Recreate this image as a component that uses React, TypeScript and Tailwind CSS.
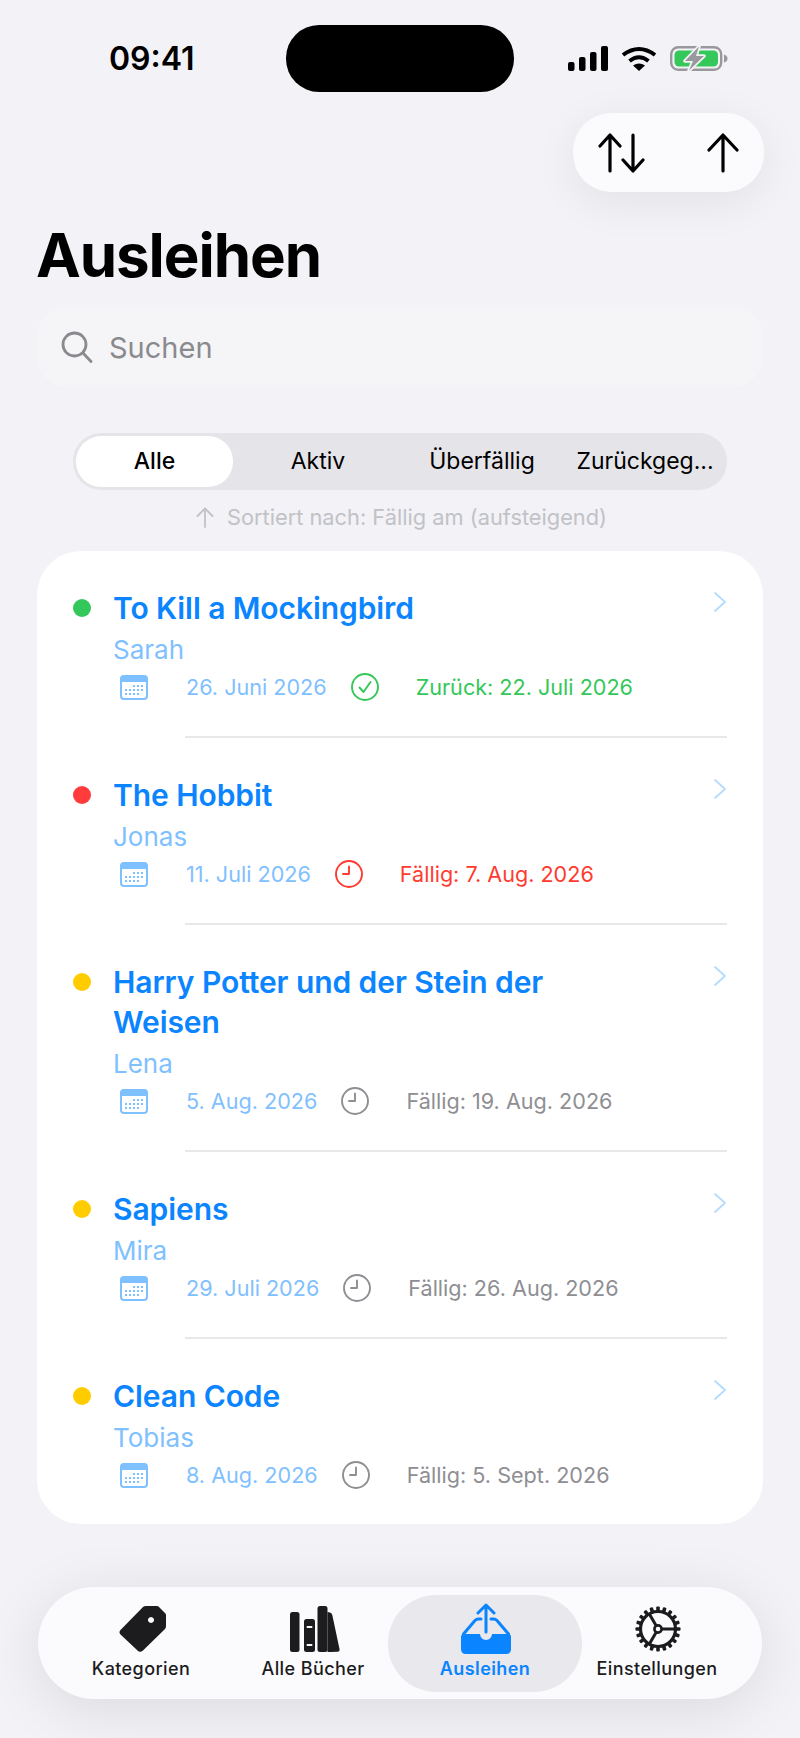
/**
 * Ausleihen screen
 * Loan list with filter tabs and bottom navigation
 */
type Status = 'returned' | 'overdue' | 'active'

interface Loan {
  title: string
  borrower: string
  lent: string
  due: string
  status: Status
}

const loans: Loan[] = [
  { title: 'To Kill a Mockingbird', borrower: 'Sarah', lent: '26. Juni 2026', due: 'Zurück: 22. Juli 2026', status: 'returned' },
  { title: 'The Hobbit', borrower: 'Jonas', lent: '11. Juli 2026', due: 'Fällig: 7. Aug. 2026', status: 'overdue' },
  { title: 'Harry Potter und der Stein der Weisen', borrower: 'Lena', lent: '5. Aug. 2026', due: 'Fällig: 19. Aug. 2026', status: 'active' },
  { title: 'Sapiens', borrower: 'Mira', lent: '29. Juli 2026', due: 'Fällig: 26. Aug. 2026', status: 'active' },
  { title: 'Clean Code', borrower: 'Tobias', lent: '8. Aug. 2026', due: 'Fällig: 5. Sept. 2026', status: 'active' },
]

const dotColor = { returned: 'bg-[#34c759]', overdue: 'bg-[#ff3b3b]', active: 'bg-[#ffcc00]' }
const dueColor = { returned: 'text-[#34c759]', overdue: 'text-[#ff3b30]', active: 'text-[#8e8e93]' }

function StatusBar() {
  return (
    <div className="flex h-[67px] items-center pl-[109px] pr-[72px]">
      <span className="w-[177px] text-[32px] font-semibold leading-none text-black">09:41</span>
      <div className="h-[67px] w-[228px] rounded-[33px] bg-black" />
      <div className="ml-auto flex items-center">
        <svg width="40" height="25" viewBox="0 0 40 25" fill="#000">
          <rect x="0" y="16" width="6.5" height="9" rx="2" />
          <rect x="11" y="11" width="6.5" height="14" rx="2" />
          <rect x="22" y="6" width="6.5" height="19" rx="2" />
          <rect x="33" y="0" width="7" height="25" rx="2" />
        </svg>
        <svg className="ml-[13px]" width="36" height="25" viewBox="0 0 36 25" fill="none" stroke="#000" strokeWidth="4">
          <path d="M2 9 Q18 -3 34 9" />
          <path d="M8.5 15 Q18 7.5 27.5 15" />
          <path d="M12 19.5 Q18 15.5 24 19.5 L18 25 Z" fill="#000" stroke="none" />
        </svg>
        <svg className="ml-[13px]" width="58" height="25" viewBox="0 0 58 25" fill="none">
          <rect x="1.2" y="1.2" width="50" height="22.6" rx="7" stroke="#98989d" strokeWidth="2.4" />
          <rect x="4.5" y="4.5" width="43.5" height="16" rx="4.5" fill="#34c759" />
          <path d="M54 8.5 Q57.5 9.5 57.5 12.5 Q57.5 15.5 54 16.5 Z" fill="#98989d" />
          <path d="M29 0.5 L15 15 H23 L19 24.5 L34 10 H26 Z" fill="#98989d" stroke="#f2f2f7" strokeWidth="3.5" strokeLinejoin="round" className="[paint-order:stroke]" />
        </svg>
      </div>
    </div>
  )
}

function SortPill() {
  return (
    <div className="mr-[36px] mt-[21px] flex h-[79px] justify-end">
      <div className="flex w-[191px] items-center justify-between rounded-[38px] bg-[#fbfbfd] pl-[25px] pr-[25px] shadow-[0_10px_45px_rgba(0,0,0,0.07)]">
        <svg width="48" height="40" viewBox="0 0 48 40" fill="none" stroke="#000" strokeWidth="3.2" strokeLinecap="round" strokeLinejoin="round">
          <path d="M12 38 V2 M2 13 L12 2 L22 13" />
          <path d="M35 2 V38 M25 27 L35 38 L45 27" />
        </svg>
        <svg width="32" height="40" viewBox="0 0 32 40" fill="none" stroke="#000" strokeWidth="3.2" strokeLinecap="round" strokeLinejoin="round">
          <path d="M16 38 V2 M2 17 L16 2 L30 17" />
        </svg>
      </div>
    </div>
  )
}

function CalendarIcon() {
  return (
    <svg width="28" height="25" viewBox="0 0 28 25" fill="none" className="shrink-0">
      <rect x="1" y="1" width="26" height="23" rx="3" stroke="#7fc0ff" strokeWidth="2" />
      <path d="M3 0.5 H25 Q27.5 0.5 27.5 3 V7 H0.5 V3 Q0.5 0.5 3 0.5 Z" fill="#7fc0ff" />
      <g fill="#7fc0ff">
        {[[14, 11], [18, 11], [22, 11], [6, 15], [10, 15], [14, 15], [18, 15], [22, 15], [6, 19], [10, 19], [14, 19], [18, 19]].map(([x, y]) => (
          <rect key={`${x}-${y}`} x={x - 1} y={y - 1} width="2" height="2" />
        ))}
      </g>
    </svg>
  )
}

function DueIcon({ status }: { status: Status }) {
  const color = status === 'returned' ? '#34c759' : status === 'overdue' ? '#ff3b30' : '#8e8e93'
  return (
    <svg width="28" height="28" viewBox="0 0 28 28" fill="none" stroke={color} strokeWidth="1.9" strokeLinecap="round" strokeLinejoin="round" className="shrink-0">
      <circle cx="14" cy="14" r="13" />
      {status === 'returned' ? <path d="M8.5 14.5 L12.5 19 L19.5 9" /> : <path d="M14 6.5 V14 H8" />}
    </svg>
  )
}

function LoanRow({ loan }: { loan: Loan }) {
  return (
    <div className="flex px-[36px] pb-[35px] pt-[37px]">
      <div className={`mt-[11px] h-[18px] w-[18px] shrink-0 rounded-full ${dotColor[loan.status]}`} />
      <div className="ml-[22px] min-w-0 flex-1">
        <div className="max-w-[480px] text-[30px] font-semibold leading-[40px] tracking-[-0.08px] text-[#0a84ff]">{loan.title}</div>
        <div className="mt-[4px] text-[26px] leading-[36px] text-[#7fc0ff]">{loan.borrower}</div>
        <div className="mt-[5px] flex h-[28px] items-center pl-[7px] text-[21.6px]">
          <CalendarIcon />
          <span className="ml-[38px] text-[#7fc0ff]">{loan.lent}</span>
          <span className="ml-[24px]"><DueIcon status={loan.status} /></span>
          <span className={`ml-[37px] ${dueColor[loan.status]}`}>{loan.due}</span>
        </div>
      </div>
      <svg width="14" height="22" viewBox="0 0 14 22" fill="none" stroke="#b5dbff" strokeWidth="1.8" strokeLinecap="round" strokeLinejoin="round" className="mt-[3px] shrink-0">
        <path d="M2 2 L12 11 L2 20" />
      </svg>
    </div>
  )
}

function TagIcon() {
  return (
    <svg width="48" height="48" viewBox="0 0 48 48" className="ml-[4px]">
      <path
        fillRule="evenodd"
        fill="#1c1c1e"
        d="M24 2 Q25 1 27 1 H38 Q39 1 40 2 L46 8 Q47 9 47 10 V21 Q47 23 46 24 L24 45.5 Q21 48 18.5 45.5 L1.5 29.5 Q-0.5 27 1.5 25 Z M32 12 a3 3 0 1 0 0.01 0 Z"
      />
    </svg>
  )
}

function BooksIcon() {
  return (
    <svg width="50" height="46" viewBox="0 0 50 46" fill="#1c1c1e" className="ml-[4px]">
      <rect x="0" y="6" width="9.5" height="40" rx="2.5" />
      <rect x="14" y="13" width="11" height="33" rx="2.5" />
      <rect x="16.5" y="20" width="6" height="2" rx="1" fill="#fbfbfd" />
      <rect x="16.5" y="38" width="6" height="2" rx="1" fill="#fbfbfd" />
      <rect x="27.5" y="0" width="10" height="46" rx="2.5" />
      <path d="M37.5 6 L40 6.5 Q42 7 42.3 9 L49.5 43 Q50 45.5 47.5 45.8 L40 46 H37.5 Z" />
    </svg>
  )
}

function TrayIcon() {
  return (
    <svg width="50" height="52" viewBox="0 0 50 52" fill="none" stroke="#0a84ff" strokeWidth="3" strokeLinecap="round" strokeLinejoin="round" className="ml-[2px]">
      <path d="M25 29 V2 M17 10 L25 2 L33 10" />
      <path d="M2.5 31 L14 17.5 Q15.5 16 17.5 16 H20" />
      <path d="M47.5 31 L36 17.5 Q34.5 16 32.5 16 H30" />
      <path d="M0 34 Q0 31 3 31 H19 A6 6 0 0 0 31 31 H47 Q50 31 50 34 V46 Q50 51 45 51 H5 Q0 51 0 46 Z" fill="#0a84ff" stroke="none" />
    </svg>
  )
}

function GearIcon() {
  const teeth = Array.from({ length: 20 }, (_, i) => i * 18)
  return (
    <svg width="48" height="48" viewBox="0 0 48 48" fill="none" stroke="#1c1c1e" strokeLinecap="round" className="ml-[1px]">
      <circle cx="24" cy="24" r="17.5" strokeWidth="3.2" />
      {teeth.map((deg) => (
        <rect key={deg} x="22.2" y="1.5" width="3.6" height="5" rx="1" fill="#1c1c1e" stroke="none" transform={`rotate(${deg} 24 24)`} />
      ))}
      <circle cx="24" cy="24" r="3.6" strokeWidth="2.6" />
      {[90, 210, 330].map((deg) => (
        <path key={deg} d="M24 19.5 V7" strokeWidth="3" transform={`rotate(${deg} 24 24)`} />
      ))}
    </svg>
  )
}

const tabs = [
  { label: 'Kategorien', icon: <TagIcon /> },
  { label: 'Alle Bücher', icon: <BooksIcon /> },
  { label: 'Ausleihen', icon: <TrayIcon />, active: true },
  { label: 'Einstellungen', icon: <GearIcon /> },
]

export default function App() {
  return (
    <div className="h-[1738px] w-[800px] overflow-hidden bg-[#f2f2f7] pt-[25px] font-['Inter',sans-serif]">
      <StatusBar />
      <SortPill />

      <h1 className="ml-[36px] mt-[27px] text-[60px] font-bold leading-[72px] tracking-[-1.05px] text-black">Ausleihen</h1>

      <div className="mx-[37px] mt-[16px] flex h-[80px] items-center rounded-[30px] bg-[#f5f5f8] pl-[24px]">
        <svg width="32" height="32" viewBox="0 0 32 32" fill="none" stroke="#8a8a8e" strokeWidth="2.8" strokeLinecap="round">
          <circle cx="13.5" cy="13.5" r="11.5" />
          <path d="M22 22 L30 30.5" />
        </svg>
        <span className="ml-[16px] text-[29px] leading-none text-[#8a8a8e]">Suchen</span>
      </div>

      <div className="mx-[73px] mt-[46px] grid h-[57px] grid-cols-[157px_170px_158px_1fr] items-center rounded-[28px] bg-[#e4e4e9] p-[3px] text-center text-[23px] text-black">
        <div className="flex h-[51px] items-center justify-center rounded-[25px] bg-white font-medium">Alle</div>
        <div>Aktiv</div>
        <div>Überfällig</div>
        <div className="whitespace-nowrap pl-[5px]">Zurückgeg...</div>
      </div>

      <div className="mt-[12px] flex h-[30px] items-center justify-center pl-[3px] text-[21.8px] text-[#c2c2c6]">
        <svg width="18" height="21" viewBox="0 0 18 21" fill="none" stroke="#c2c2c6" strokeWidth="1.8" strokeLinecap="round" strokeLinejoin="round">
          <path d="M9 20 V1.5 M1.5 9 L9 1.5 L16.5 9" />
        </svg>
        <span className="ml-[13px]">Sortiert nach: Fällig am (aufsteigend)</span>
      </div>

      <div className="mx-[37px] mt-[19px] rounded-[44px] bg-white">
        {loans.map((loan, index) => (
          <div key={loan.title}>
            {index > 0 && <div className="ml-[148px] mr-[36px] h-[2px] bg-[#e8e8ea]" />}
            <LoanRow loan={loan} />
          </div>
        ))}
      </div>

      <div className="mx-[38px] mt-[63px] grid h-[112px] grid-cols-4 rounded-[56px] bg-[#fbfbfd] pl-[17px] pr-[19px] pt-[8px] shadow-[0_10px_60px_rgba(0,0,0,0.1)]">
        {tabs.map((tab) => (
          <div
            key={tab.label}
            className={`flex h-[97px] flex-col items-center ${tab.active ? '-mx-[11px] rounded-[48px] bg-[#e8e8ed] text-[#0a84ff]' : 'text-[#1c1c1e]'}`}
          >
            <div className="mt-[8px] flex h-[52px] items-center justify-center">{tab.icon}</div>
            <span className={`mt-[3px] whitespace-nowrap text-[18px] leading-[22px] tracking-[0.4px] ${tab.active ? 'font-semibold' : 'font-medium'}`}>{tab.label}</span>
          </div>
        ))}
      </div>
    </div>
  )
}
